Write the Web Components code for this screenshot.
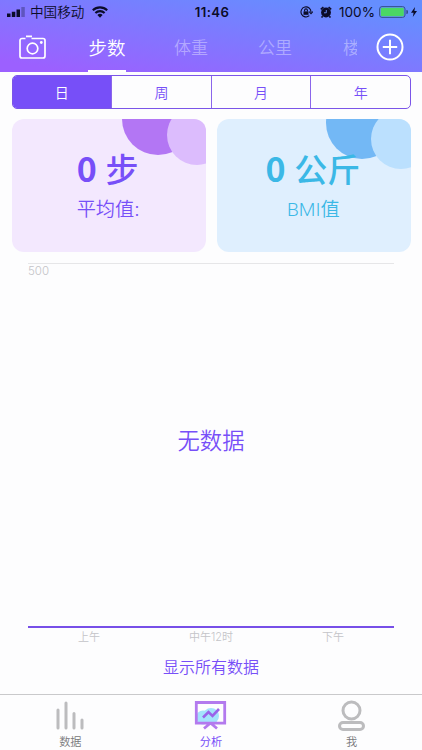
<!DOCTYPE html>
<html lang="zh-CN">
<head>
<meta charset="utf-8">
<title>分析</title>
<style>
  body {
    margin: 0;
    font-family: Inter, "Noto Sans CJK SC", sans-serif;
    font-weight: 350;
    background: #fdfdfe;
    color: #774ff8;
  }
</style>
</head>
<body>
<analysis-app></analysis-app>

<script>
const define = (name, html) => {
  const template = document.createElement('template')
  template.innerHTML = html

  customElements.define(name, class extends HTMLElement {
    constructor() {
      super()

      this.attachShadow({ mode: 'open' })
      this.shadowRoot.appendChild(template.content.cloneNode(true))
    }
  })
}

define('status-bar', `
<style>
  :host {
    display: grid;
    grid-template-columns: 1fr auto 1fr;
    align-items: center;
    height: 24px;
    padding: 0 5px 0 7px;
    color: #0b0c29;
    font-size: 13px;
    font-weight: 400;
    line-height: 24px;
    white-space: nowrap;
  }
  div { display: flex; align-items: center; }
  svg { display: block; flex: none; }
  .carrier { font-size: 13.6px; font-weight: 350; margin: 0 8px 0 5px; }
  .time { font-size: 13.2px; font-weight: 600; letter-spacing: 0.4px; }
  .right { justify-content: flex-end; }
  .percent { margin: 0 4px 0 7px; font-size: 13.6px; }
</style>
<div>
  <svg width="18" height="12" viewBox="0 0 18 12">
    <path d="M0 7.5h3.5V11H0zM4.8 5.8h3.5V11H4.8zM9.5 3.5H13V11H9.5z" fill="#0b0c29"/>
    <path d="M14.3 1h3.5v10h-3.5z" fill="#0b0c29" opacity=".3"/>
  </svg>
  <span class="carrier">中国移动</span>
  <svg width="16" height="12" viewBox="0 0 16 12" fill="none" stroke="#0b0c29" stroke-width="2.1">
    <path d="M.8 4.3a10.4 10.4 0 0 1 14.4 0M3.4 7a6.6 6.6 0 0 1 9.2 0"/>
    <path d="M5.4 9a3.8 3.8 0 0 1 5.2 0L8 11.8z" fill="#0b0c29" stroke="none"/>
  </svg>
</div>
<span class="time">11:46</span>
<div class="right">
  <svg width="13" height="12" viewBox="0 0 13 12" fill="none" stroke="#0b0c29" stroke-width="1.1">
    <path d="M9.3 9.7A5 5 0 1 1 11 6M9.2 5.6 11 7.6l1.8-2"/>
    <path d="M3.5 5.4h5v3.4h-5z" fill="#0b0c29" stroke="none"/>
    <path d="M4.6 5.6V4.3a1.4 1.4 0 0 1 2.8 0v1.3"/>
  </svg>
  <svg width="12" height="12" viewBox="0 0 12 12" style="margin-left:7px">
    <circle cx="6" cy="6.5" r="4.9" fill="#0b0c29"/>
    <path d="M.8 3.3 3.4 1M11.2 3.3 8.6 1M2.7 10.2l-1.2 1.3M9.3 10.2l1.2 1.3" stroke="#0b0c29" stroke-width="1.6"/>
    <path d="M6.3 4v2.8H4" fill="none" stroke="#6c8fff" stroke-width=".9"/>
  </svg>
  <span class="percent">100%</span>
  <svg width="29" height="12" viewBox="0 0 29 12">
    <rect x=".6" y=".6" width="25.4" height="10.8" rx="2.4" fill="none" stroke="#36508f"/>
    <rect x="1.8" y="1.8" width="23" height="8.4" rx="1.3" fill="#4bd763"/>
    <path d="M27.3 4a2 2 0 0 1 0 4z" fill="#36508f"/>
  </svg>
  <svg width="6" height="10" viewBox="0 0 6 10" style="margin-left:3px"><path d="M4 0 0 5.7h2.6L1.8 10 6 4H3.4z" fill="#0b0c29"/></svg>
</div>`)

define('top-nav', `
<style>
  :host {
    display: flex;
    height: 48px;
    align-items: stretch;
    color: #fff;
    font-size: 17px;
  }
  .camera { width: 54px; padding: 10px 0 0 19px; box-sizing: border-box; }
  .plus { padding: 9px 0 0 19px; }
  svg { display: block; }
  nav { flex: none; width: 303px; display: flex; overflow: hidden; }
  span {
    flex: none;
    width: 84px;
    line-height: 49px;
    text-align: center;
    color: rgba(255, 255, 255, .38);
  }
  .active {
    display: flex;
    justify-content: center;
    width: 38px;
    margin: 0 23px 0 34px;
    box-sizing: border-box;
    border-bottom: 2px solid #fff;
    font-size: 18.5px;
    color: #fff;
  }
  .more { width: 17px; margin-left: 26px; text-align: left; }
</style>
<div class="camera">
  <svg width="28" height="28" viewBox="0 0 28 28" fill="none" stroke="#fff" stroke-width="1.7">
    <path d="M6.5 4.5H3a2 2 0 0 0-2 2V22a2 2 0 0 0 2 2h21a2 2 0 0 0 2-2V6.5a2 2 0 0 0-2-2H12.5M7 2.300h6"/>
    <circle cx="13.5" cy="14.5" r="5.3"/>
    <circle cx="22.3" cy="8.5" r="1.4" fill="#fff" stroke="none"/>
  </svg>
</div>
<nav>
  <span class="active">步数</span><span>体重</span><span>公里</span><span class="more">楼</span>
</nav>
<div class="plus">
  <svg width="28" height="28" viewBox="0 0 28 28" fill="none" stroke="#fff" stroke-width="2">
    <circle cx="14" cy="14" r="12.5"/><path d="M14 6.8v14.4M6.8 14h14.4"/>
  </svg>
</div>`)

define('period-switch', `
<style>
  :host {
    display: flex;
    height: 34px;
    margin: 3px 11px 0 11.5px;
    box-sizing: border-box;
    border: 1px solid #7b55e8;
    border-radius: 5px;
    overflow: hidden;
    font-size: 14px;
    line-height: 33px;
  }
  span { flex: 1; text-align: center; border-left: 1px solid #8b66eb; }
  span:first-of-type { border-left: 0; background: #774ff8; color: #fff; }
</style>
<span>日</span><span>周</span><span>月</span><span>年</span>`)

define('stat-card', `
<style>
  :host {
    display: flex;
    flex: 1;
    flex-direction: column;
    align-items: center;
    position: relative;
    height: 133px;
    border-radius: 12px;
    overflow: hidden;
    background: #f3e8fe;
    color: #774ff8;
    --big: #b376f4;
    --small: #dcbcfd;
  }
  :host([tone="blue"]) {
    background: #dfeffe;
    color: #3bb8e6;
    --big: #73b8f5;
    --small: #bbe0fe;
  }
  svg { position: absolute; top: 0; right: 0; overflow: visible; }
  :host([tone="blue"]) svg { top: 4px; right: 1px; }
  .big { fill: var(--big); }
  .small { fill: var(--small); }
  .value { position: relative; margin-top: 25px; padding-right: 2px; font-size: 33px; line-height: 48px; font-weight: 500; white-space: pre; }
  .value b { font-size: 34px; font-weight: 700; font-family: "Noto Sans CJK SC", sans-serif; }
  .label { position: relative; margin-top: 1px; padding-right: 1px; font-size: 19.2px; line-height: 29px; }
  :host([tone="blue"]) .label { font-family: Roboto, "Noto Sans CJK SC", sans-serif; }
</style>
<svg width="84" height="50" viewBox="0 0 84 50">
  <circle class="big" cx="36" cy="0" r="36"/>
  <circle class="small" cx="75" cy="16" r="30"/>
</svg>
<div class="value"><b><slot name="number"></slot></b> <slot name="unit"></slot></div>
<div class="label"><slot></slot></div>`)

define('data-chart', `
<style>
  :host { display: flex; flex-direction: column; margin: 11px 28px 0; font-size: 11px; color: #c4c4c8; }
  .plot {
    display: flex;
    flex-direction: column;
    height: 362px;
    border-top: 1px solid #e6e6e8;
    border-bottom: 2px solid #774fe8;
  }
  .max { font-size: 11.5px; line-height: 14px; }
  .empty {
    flex: 1;
    display: flex;
    align-items: center;
    justify-content: center;
    font-size: 22.3px;
    color: #774ff8;
    padding-bottom: 27px;
  }
  .axis { display: flex; line-height: 18px; }
  .axis span { flex: 1; text-align: center; }
</style>
<div class="plot"><span class="max">500</span><div class="empty">无数据</div></div>
<div class="axis"><span>上午</span><span>中午12时</span><span>下午</span></div>`)

define('tab-item', `
<style>
  :host { flex: 1; display: flex; flex-direction: column; align-items: center; color: #77777a; font-size: 11.2px; line-height: 16px; }
  :host([active]) { color: #774ff8; font-weight: 400; }
</style>
<slot name="icon"></slot>
<slot></slot>`)

define('tab-bar', `
<style>
  :host { display: flex; height: 55px; border-top: 1px solid #c9c9cb; }
  svg { display: block; margin: 4px 0 1px; }
</style>
<tab-item>
  <svg slot="icon" width="34" height="34" viewBox="0 0 34 34" fill="none" stroke="#bcbcbe" stroke-width="3" stroke-linecap="round">
    <path d="M5 11v18M13 4v25M21 14.5V29M29 21v8"/>
  </svg>数据
</tab-item>
<tab-item active>
  <svg slot="icon" width="34" height="34" viewBox="0 0 34 34">
    <circle cx="9" cy="18.5" r="7" fill="#a4e3fc"/><circle cx="17" cy="17" r="8" fill="#a4e3fc"/>
    <path d="M2.3 3.5h28.4v20.6H2.3zM16.5 24l-6.500 5.5M16.5 24l6.500 5.5" fill="none" stroke="#b37aee" stroke-width="2.8"/>
    <path d="m9 18.5 5.5-5.5 4 4 6.5-7" fill="none" stroke="#9a63ea" stroke-width="2.6"/>
  </svg>分析
</tab-item>
<tab-item>
  <svg slot="icon" width="34" height="34" viewBox="0 0 34 34" fill="none" stroke="#bcbcbe" stroke-width="3">
    <circle cx="16.5" cy="11.5" r="8.5"/><rect x="4.5" y="23.5" width="24" height="7" rx="3.5"/>
  </svg>我
</tab-item>`)

define('analysis-app', `
<style>
  :host { display: flex; flex-direction: column; height: 750px; overflow: hidden; }
  header { height: 72px; background: linear-gradient(190deg, #658eff 12%, #9c60ff 92%); }
  .cards { display: flex; gap: 11px; margin: 10px 11px 0 11.5px; }
  .all { margin-top: 9px; text-align: center; font-size: 16px; line-height: 24px; }
  tab-bar { margin-top: auto; }
</style>
<header><status-bar></status-bar><top-nav></top-nav></header>
<period-switch></period-switch>
<div class="cards">
  <stat-card><span slot="number">0</span><span slot="unit">步</span>平均值:</stat-card>
  <stat-card tone="blue"><span slot="number">0</span><span slot="unit">公斤</span>BMI值</stat-card>
</div>
<data-chart></data-chart>
<div class="all">显示所有数据</div>
<tab-bar></tab-bar>`)
</script>
</body>
</html>
